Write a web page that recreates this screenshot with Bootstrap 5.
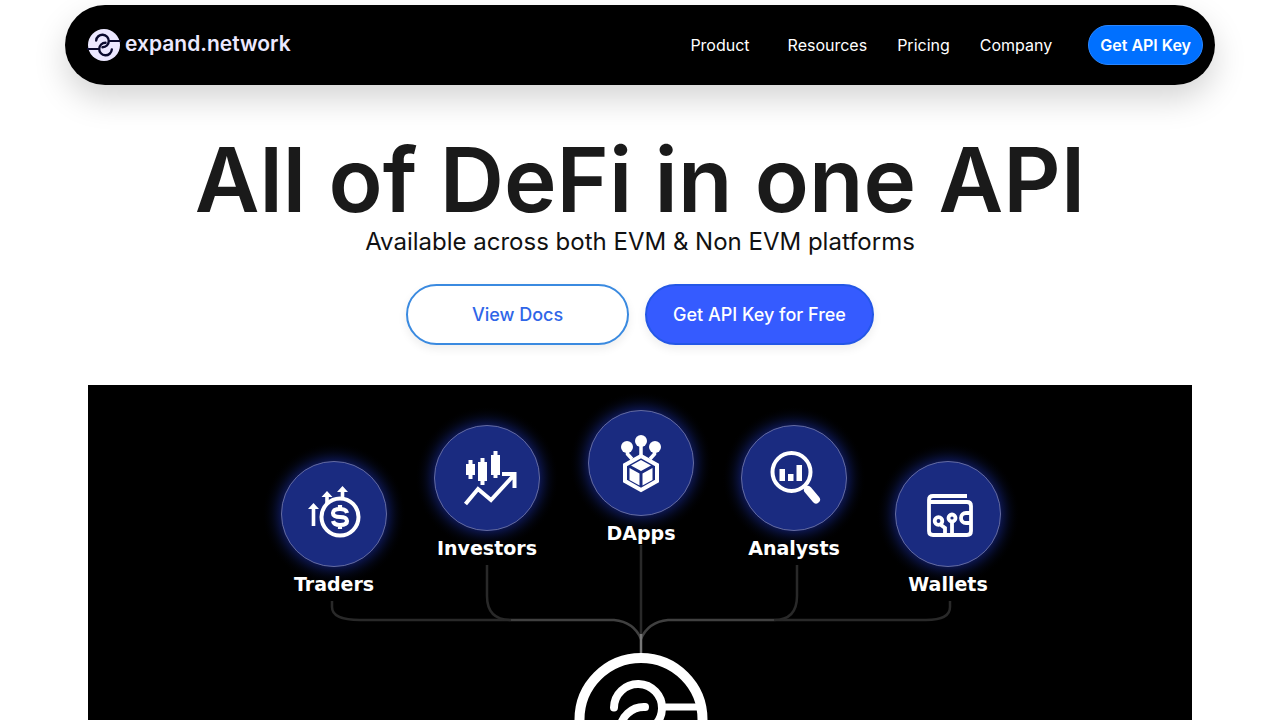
<!DOCTYPE html>
<html lang="en">
<head>
<meta charset="utf-8">
<meta name="viewport" content="width=device-width, initial-scale=1">
<title>expand.network</title>
<link href="https://cdn.jsdelivr.net/npm/bootstrap@5.3.0/dist/css/bootstrap.min.css" rel="stylesheet">
<style>
body { font-family: Inter, "Liberation Sans", sans-serif; color: #1a1a1a; background: #fff; }
.site-header { padding-top: 5px; }
.site-nav { max-width: 1150px; min-height: 80px; background: #000; border-radius: 40px; box-shadow: 0 14px 32px rgba(0, 0, 0, .17); padding: 0 12px 0 22px; }
.brand-name { font-size: 21px; line-height: 32px; font-weight: 600; color: #ece8ff; padding-bottom: 2px; }
.menu-links { gap: 30px; margin-right: 36px; }
.menu-links a { color: #fff; font-size: 16px; line-height: 24px; }
.btn-key { background: #0070ff; color: #fff; border: 1px solid #2a86ff; font-size: 16px; line-height: 24px; font-weight: 600; padding: 7px 11px; }
.hero-title { font-size: 89px; line-height: 94px; font-weight: 600; }
.hero-sub { font-size: 24px; line-height: 30px; color: #111; margin-bottom: 27px; }
.btn-cta { font-size: 18px; line-height: 27px; font-weight: 500; padding: 15px 26px; border-width: 2px; box-shadow: 0 4px 10px rgba(0, 0, 0, .07); }
.btn-docs { min-width: 223px; color: #2f66e8; border-color: #3a8ae0; background: #fff; }
.btn-free { min-width: 229px; color: #fff; border-color: #2457e6; background: #355bff; }
.btn-docs:hover { color: #fff; background: #3a8ae0; }
.btn-free:hover, .btn-key:hover { color: #fff; background: #2457e6; }
.diagram { max-width: 1104px; min-height: 335px; background: #000; }
.diagram text { font: bold 19px "DejaVu Sans", sans-serif; fill: #fff; text-anchor: middle; }
</style>
</head>
<body>
<div class="vh-100 d-flex flex-column overflow-hidden">
  <header class="site-header px-3">
    <nav class="site-nav w-100 mx-auto d-flex align-items-center justify-content-between">
      <a href="#" class="d-flex align-items-center gap-1 text-decoration-none">
        <svg width="34" height="34" viewBox="-17 -17 34 34" fill="none" stroke="#0a0a2e" stroke-width="2.4" aria-hidden="true">
          <circle r="16" fill="#ece8ff" stroke="none"/>
          <g id="hook"><path stroke-linecap="round" d="M-7.800-4.500A6.300 6.300 0 1 1-1.500 2.300"/><path stroke-width="2" d="M4.500-4H17"/></g>
          <use href="#hook" transform="rotate(180)"/>
        </svg>
        <span class="brand-name">expand.network</span>
      </a>
      <div class="d-flex align-items-center">
        <div class="menu-links d-none d-lg-flex">
          <a href="#" class="text-decoration-none me-2">Product</a>
          <a href="#" class="text-decoration-none">Resources</a>
          <a href="#" class="text-decoration-none">Pricing</a>
          <a href="#" class="text-decoration-none">Company</a>
        </div>
        <button type="button" class="btn btn-key rounded-pill">Get API Key</button>
      </div>
    </nav>
  </header>

  <main class="d-flex flex-column flex-grow-1 text-center px-3">
    <h1 class="hero-title mt-5 mb-0">All of DeFi in one API</h1>
    <p class="hero-sub">Available across both EVM &amp; Non EVM platforms</p>
    <div class="d-flex flex-wrap justify-content-center gap-3 mb-4">
      <button type="button" class="btn btn-cta btn-docs rounded-pill">View Docs</button>
      <button type="button" class="btn btn-cta btn-free rounded-pill">Get API Key for Free</button>
    </div>
    <div class="diagram w-100 mx-auto mt-3 flex-grow-1 d-flex">
      <svg class="w-100 h-100" viewBox="0 0 1104 335" preserveAspectRatio="xMidYMin slice" role="img" aria-label="Traders, Investors, DApps, Analysts and Wallets connected to expand.network">
        <defs>
          <radialGradient id="glow">
            <stop offset=".72" stop-color="#1b2fa8" stop-opacity=".5"/>
            <stop offset=".86" stop-color="#10206e" stop-opacity=".18"/>
            <stop offset="1" stop-color="#000" stop-opacity="0"/>
          </radialGradient>
          <g id="disc"><circle r="72" fill="url(#glow)"/><circle r="52.500" fill="#1a2b80" stroke="#646ba0"/></g>
        </defs>

        <!-- connectors -->
        <g fill="none" stroke="#292929" stroke-width="2.500">
          <path d="M244 216V222Q244 235 272 235H423M862 216V222Q862 235 838 235H686"/>
          <path d="M399 180V211Q399 235 423 235M709 180V211Q709 235 686 235"/>
          <path d="M553 160V250"/>
          <path stroke="#404040" d="M423 235H526Q546 237 553 254Q560 237 580 235H686"/>
          <path stroke="#777" d="M553 249V270"/>
        </g>

        <g transform="translate(246 129)">
          <use href="#disc"/>
          <g fill="none" stroke="#fff" stroke-width="4">
            <circle cx="6" cy="3" r="18.500"/>
            <path stroke-width="4.200" d="M13-1Q12-5 6-5Q-1-5-1-1Q-1 3 6 3Q13 3 13 7Q13 11 6 11Q0 11-1 7M6-9V-5M6 11V15"/>
            <path stroke-width="3.600" d="M-20.500 12V-8M-7-11V-19M8.500-16V-24"/>
          </g>
          <path fill="#fff" d="M-26-5L-20.500-11L-15-5ZM-12.500-17L-7-23L-1.500-17ZM3-22L8.500-28L14-22Z"/>
          <text y="77">Traders</text>
        </g>

        <g transform="translate(399 93)">
          <use href="#disc"/>
          <path fill="#fff" d="M-21-14H-18.500V-18H-14.500V-14H-12V-3H-14.500V1H-18.500V-3H-21ZM-9-16H-6.500V-20H-2.500V-16H0V3H-2.500V7H-6.500V3H-9ZM4-23H6.500V-27H10.500V-23H13V-3H10.500V0H6.500V-3H4Z"/>
          <path fill="none" stroke="#fff" stroke-width="4" d="M-21.500 26L-9 11L4 22L27-3M15-4H27.500V10"/>
          <text y="77">Investors</text>
        </g>

        <g transform="translate(553 78)">
          <use href="#disc"/>
          <g fill="none" stroke="#fff" stroke-width="3.500">
            <path d="M0-22V-8M-13.500-16V-9L-9-4M13.500-16V-9L9-4"/>
            <path stroke-width="4" d="M0-7L16 2V18L0 27L-16 18V2Z"/>
          </g>
          <g fill="#fff">
            <circle cx="-14" cy="-16" r="6"/><circle cy="-22" r="6"/><circle cx="14" cy="-16" r="6"/>
            <path d="M0-3L10 2.500L0 8L-10 2.500ZM-11.500 5L-1.500 10.500V22.500L-11.500 17ZM11.500 5L1.500 10.500V22.500L11.500 17Z"/>
          </g>
          <text y="77">DApps</text>
        </g>

        <g transform="translate(706 93)">
          <use href="#disc"/>
          <circle cx="-2.500" cy="-6" r="19" fill="none" stroke="#fff" stroke-width="4"/>
          <path fill="#fff" d="M-14.500-9H-9V3H-14.500ZM-6-4H-.5V3H-6ZM2.500-13H8V3H2.500Z"/>
          <path stroke="#fff" stroke-width="4" d="M10 7L16 14"/>
          <path stroke="#fff" stroke-width="8" stroke-linecap="round" d="M14 12L22 21.500"/>
          <text y="77">Analysts</text>
        </g>

        <g transform="translate(860 129)">
          <use href="#disc"/>
          <g fill="none" stroke="#fff" stroke-width="3.800">
            <path d="M19-18H-15Q-19-18-19-14V17Q-19 21-15 21H19Q23 21 23 17V-8Q23-12 19-12H-19"/>
            <path d="M23-1H18A5 5 0 0 0 18 9H23"/>
            <circle cx="-9.500" cy="7" r="3.800"/><circle cx="4" cy="4" r="3.500"/>
            <path d="M4 8V20M-7 11L-3 14V20"/>
          </g>
          <text y="77">Wallets</text>
        </g>

        <!-- central mark -->
        <g transform="translate(553 334.500)" fill="none" stroke="#fff" stroke-width="8">
          <circle r="61.500" stroke-width="10"/>
          <g id="mark"><path stroke-linecap="round" d="M-27-12A24 24 0 1 1-4 12.500"/><path stroke-width="7" d="M21-12.500H60"/></g>
          <use href="#mark" transform="rotate(180)"/>
        </g>
      </svg>
    </div>
  </main>
</div>
<script src="https://cdn.jsdelivr.net/npm/bootstrap@5.3.0/dist/js/bootstrap.bundle.min.js"></script>
</body>
</html>
